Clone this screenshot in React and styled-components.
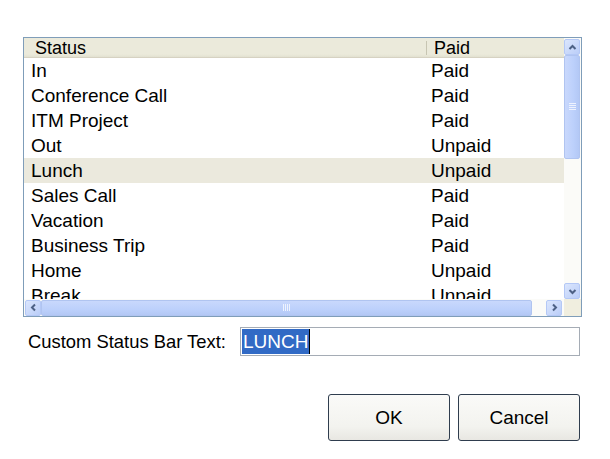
import React from "react";
import styled, { createGlobalStyle } from "styled-components";

const Global = createGlobalStyle`
  html, body { margin: 0; padding: 0; background: #fff; }
  body { font-family: "Liberation Sans", Arial, sans-serif; color: #000; }
`;

const Page = styled.div`
  width: 610px;
  height: 459px;
  box-sizing: border-box;
  padding: 37px 30px 0 23px;
  display: flex;
  flex-direction: column;
`;

const ListBox = styled.div`
  width: 559px;
  height: 280px;
  box-sizing: border-box;
  border: 1px solid #7f9db9;
  display: grid;
  grid-template-columns: 540px 17px;
  grid-template-rows: 1fr 17px;
  overflow: hidden;
`;

const Content = styled.div`
  display: flex;
  flex-direction: column;
  overflow: hidden;
`;

const Header = styled.div`
  height: 20px;
  flex: none;
  display: grid;
  grid-template-columns: 402px 1fr;
  background: linear-gradient(#ebeadb, #ebeadb 85%, #e2e1d1);
  border-bottom: 1px solid #d6d2c2;
  box-sizing: border-box;
  font-size: 18px;
  line-height: 20px;
`;

const HeaderCell = styled.div`
  padding-left: ${(p) => p.$pad}px;
  position: relative;
  white-space: nowrap;
  ${(p) =>
    p.$divider &&
    `&::before { content: ""; position: absolute; left: 0; top: 3px; bottom: 3px; width: 1px; background: #c7c5b2; }`}
`;

const Body = styled.div`
  flex: 1;
  overflow: hidden;
`;

const Row = styled.div`
  height: 25px;
  display: grid;
  grid-template-columns: 402px 1fr;
  font-size: 19px;
  line-height: 25px;
  background: ${(p) => (p.$selected ? "#ebe9dd" : "#fff")};
`;

const Cell = styled.div`
  padding-left: ${(p) => p.$pad}px;
  white-space: nowrap;
`;

const VScroll = styled.div`
  background: #fbfbf8;
  display: flex;
  flex-direction: column;
  padding-top: 1px;
  box-sizing: border-box;
`;

const HScroll = styled.div`
  background: #fbfbf8;
  display: flex;
  align-items: center;
  padding-left: 1px;
  padding-right: 2px;
`;

const Corner = styled.div`
  background: #f0eedf;
`;

const ArrowBtn = styled.div`
  width: 16px;
  height: 16px;
  flex: none;
  box-sizing: border-box;
  border: 1px solid #b4c8f6;
  border-radius: 2px;
  background: linear-gradient(135deg, #dbe6fd, #bacdf8);
  display: flex;
  align-items: center;
  justify-content: center;
`;

const VThumb = styled.div`
  height: 104px;
  width: 16px;
  box-sizing: border-box;
  border: 1px solid #b0c4f0;
  border-radius: 2px;
  background: linear-gradient(90deg, #c9d8fc, #bcd0fb 60%, #b3c8f5);
  display: flex;
  align-items: center;
  justify-content: center;
`;

const VTrack = styled.div`
  flex: 1;
`;

const HThumb = styled.div`
  width: 491px;
  height: 16px;
  box-sizing: border-box;
  border: 1px solid #b0c4f0;
  border-radius: 2px;
  background: linear-gradient(#c9d8fc, #bcd0fb 60%, #b3c8f5);
  display: flex;
  align-items: center;
  justify-content: center;
`;

const HTrack = styled.div`
  flex: 1;
`;

const FieldRow = styled.div`
  display: flex;
  align-items: center;
  margin-top: 10px;
  padding-left: 5px;
  width: 557px;
  box-sizing: border-box;
`;

const Label = styled.label`
  font-size: 18.4px;
  width: 212px;
  flex: none;
  white-space: nowrap;
`;

const TextBox = styled.div`
  flex: 1;
  height: 29px;
  box-sizing: border-box;
  border: 1px solid #a5acb5;
  padding: 1px;
  display: flex;
  align-items: stretch;
`;

const Selected = styled.span`
  background: #316ac5;
  color: #fff;
  font-size: 19px;
  line-height: 25px;
  padding: 0 1px;
  border-right: 1px solid #000;
`;

const Buttons = styled.div`
  display: flex;
  justify-content: flex-end;
  gap: 8px;
  margin-top: 38px;
  width: 557px;
`;

const Button = styled.button`
  width: 122px;
  height: 47px;
  box-sizing: border-box;
  border: 1px solid #2f3d4e;
  border-radius: 3px;
  background: linear-gradient(#fafaf8, #f3f3ef 70%, #e8e7e2);
  font-family: "Liberation Sans", Arial, sans-serif;
  font-size: 19px;
  color: #000;
  padding: 0;
`;

const Grip = ({ vertical }) =>
  vertical ? (
    <svg width="7" height="8" viewBox="0 0 7 8">
      {[1, 3, 5, 7].map((y) => (
        <line key={y} x1="0" x2="7" y1={y - 0.5} y2={y - 0.5} stroke="#eef3fe" strokeWidth="1" />
      ))}
    </svg>
  ) : (
    <svg width="8" height="7" viewBox="0 0 8 7">
      {[1, 3, 5, 7].map((x) => (
        <line key={x} y1="0" y2="7" x1={x - 0.5} x2={x - 0.5} stroke="#eef3fe" strokeWidth="1" />
      ))}
    </svg>
  );

const Chevron = ({ dir }) => {
  const pts = {
    up: "1.5,6 4.5,3 7.5,6",
    down: "1.5,3 4.5,6 7.5,3",
    left: "6,1.5 3,4.5 6,7.5",
    right: "3,1.5 6,4.5 3,7.5",
  }[dir];
  return (
    <svg width="9" height="9" viewBox="0 0 9 9">
      <polyline points={pts} fill="none" stroke="#4d6185" strokeWidth="2" />
    </svg>
  );
};

const rows = [
  ["In", "Paid"],
  ["Conference Call", "Paid"],
  ["ITM Project", "Paid"],
  ["Out", "Unpaid"],
  ["Lunch", "Unpaid"],
  ["Sales Call", "Paid"],
  ["Vacation", "Paid"],
  ["Business Trip", "Paid"],
  ["Home", "Unpaid"],
  ["Break", "Unpaid"],
];

export default function App() {
  return (
    <>
      <Global />
      <Page>
        <ListBox>
          <Content>
            <Header>
              <HeaderCell $pad={11}>Status</HeaderCell>
              <HeaderCell $pad={8} $divider>Paid</HeaderCell>
            </Header>
            <Body>
              {rows.map(([s, p]) => (
                <Row key={s} $selected={s === "Lunch"}>
                  <Cell $pad={7}>{s}</Cell>
                  <Cell $pad={5}>{p}</Cell>
                </Row>
              ))}
            </Body>
          </Content>
          <VScroll>
            <ArrowBtn><Chevron dir="up" /></ArrowBtn>
            <VThumb><Grip vertical /></VThumb>
            <VTrack />
            <ArrowBtn><Chevron dir="down" /></ArrowBtn>
          </VScroll>
          <HScroll>
            <ArrowBtn><Chevron dir="left" /></ArrowBtn>
            <HThumb><Grip /></HThumb>
            <HTrack />
            <ArrowBtn><Chevron dir="right" /></ArrowBtn>
          </HScroll>
          <Corner />
        </ListBox>
        <FieldRow>
          <Label>Custom Status Bar Text:</Label>
          <TextBox>
            <Selected>LUNCH</Selected>
          </TextBox>
        </FieldRow>
        <Buttons>
          <Button>OK</Button>
          <Button>Cancel</Button>
        </Buttons>
      </Page>
    </>
  );
}
